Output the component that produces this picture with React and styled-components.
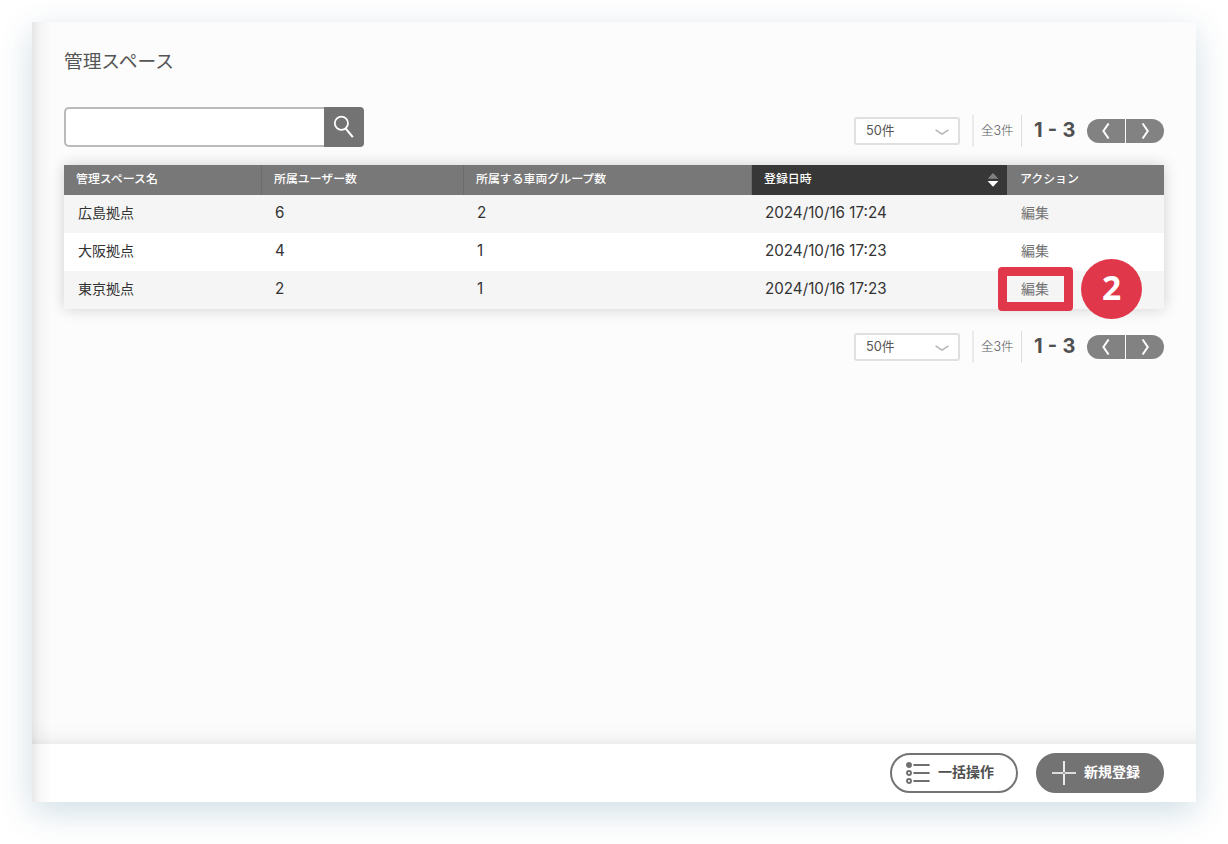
import React from 'react';
import styled, { createGlobalStyle, css } from 'styled-components';

const columns = [
  { key: 'name', label: '管理スペース名' },
  { key: 'users', label: '所属ユーザー数' },
  { key: 'groups', label: '所属する車両グループ数' },
  { key: 'createdAt', label: '登録日時', sorted: true },
  { key: 'action', label: 'アクション' },
];

const spaces = [
  { name: '広島拠点', users: 6, groups: 2, createdAt: '2024/10/16 17:24' },
  { name: '大阪拠点', users: 4, groups: 1, createdAt: '2024/10/16 17:23' },
  { name: '東京拠点', users: 2, groups: 1, createdAt: '2024/10/16 17:23', step: 2 },
];

function Pagination() {
  return (
    <Pager>
      <PageSize>
        50件
        <svg width="14" height="7" viewBox="0 0 14 7" fill="none" stroke="#b4b4b4" strokeWidth="1.5">
          <path d="M0.6 0.9 L7 5.2 L13.4 0.9" />
        </svg>
      </PageSize>
      <Total>全3件</Total>
      <Range>1 - 3</Range>
      <PageButtons>
        <PageButton $side="left" aria-label="前へ">
          <svg width="8" height="16" viewBox="0 0 8 16" fill="none" stroke="#fff" strokeWidth="2">
            <path d="M6.6 0.5 L1.4 8 L6.6 15.5" />
          </svg>
        </PageButton>
        <PageButton $side="right" aria-label="次へ">
          <svg width="8" height="16" viewBox="0 0 8 16" fill="none" stroke="#fff" strokeWidth="2">
            <path d="M1.6 0.5 L6.8 8 L1.6 15.5" />
          </svg>
        </PageButton>
      </PageButtons>
    </Pager>
  );
}

function App() {
  return (
    <Panel>
      <GlobalStyle />
      <Main>
        <Title>管理スペース</Title>
        <Toolbar>
          <Search>
            <SearchInput />
            <SearchButton aria-label="検索">
              <svg width="22" height="24" viewBox="0 0 22 24" fill="none" stroke="#fff">
                <circle cx="8.4" cy="8.3" r="6.6" strokeWidth="1.8" />
                <path d="M12.4 13.2 L19.8 22.2" strokeWidth="2.1" />
              </svg>
            </SearchButton>
          </Search>
          <Pagination />
        </Toolbar>
        <Table>
          <HeadRow>
            {columns.map((column) => (
              <HeadCell key={column.key} $sorted={column.sorted}>
                {column.label}
                {column.sorted && (
                  <svg width="12" height="14" viewBox="0 0 12 14">
                    <path d="M6 0 L11.4 5.8 H0.6 Z" fill="#828282" />
                    <path d="M6 13.8 L11.4 8 H0.6 Z" fill="#fff" />
                  </svg>
                )}
              </HeadCell>
            ))}
          </HeadRow>
          {spaces.map((space) => (
            <Row key={space.name}>
              <Cell $name>{space.name}</Cell>
              <Cell>{space.users}</Cell>
              <Cell>{space.groups}</Cell>
              <Cell>{space.createdAt}</Cell>
              <Cell $action>
                <EditLink>編集</EditLink>
                {space.step && <Highlight />}
                {space.step && <StepBadge>{space.step}</StepBadge>}
              </Cell>
            </Row>
          ))}
        </Table>
        <Pagination />
      </Main>
      <Footer>
        <ActionButton>
          <svg width="24" height="24" viewBox="0 0 24 24" fill="none" stroke="#6f6f6f" strokeWidth="1.9">
            <circle cx="3" cy="4" r="2" fill="#6f6f6f" />
            <circle cx="3" cy="12" r="2" />
            <circle cx="3" cy="20" r="2" />
            <path d="M7.4 4 H23.6 M7.4 12 H23.6 M7.4 20 H23.6" />
          </svg>
          <span>一括操作</span>
        </ActionButton>
        <ActionButton $primary>
          <svg width="24" height="24" viewBox="0 0 24 24" fill="none" stroke="#fff" strokeWidth="1.7">
            <path d="M0 12 H11.2 M12.8 12 H24 M12 0 V11.2 M12 12.8 V24" />
          </svg>
          <span>新規登録</span>
        </ActionButton>
      </Footer>
    </Panel>
  );
}

const GlobalStyle = createGlobalStyle`
  * {
    box-sizing: border-box;
  }

  body {
    margin: 0;
    padding: 22px 32px 42px;
    background: #fff;
    color: #333;
    font-family: Inter, 'Noto Sans CJK JP', sans-serif;
    overflow: hidden;
  }

  button {
    font-family: inherit;
    border: 0;
    padding: 0;
  }

  svg {
    display: block;
    flex: none;
  }
`;

const Panel = styled.div`
  position: relative;
  display: flex;
  flex-direction: column;
  height: 780px;
  background: #fff;
  box-shadow: 0 10px 32px rgba(0, 80, 112, 0.19);

  /* shade cast on the left edge by the side menu */
  &::before {
    content: '';
    position: absolute;
    inset: 0 auto 0 0;
    z-index: 1;
    width: 20px;
    background: linear-gradient(to right, rgba(0, 0, 0, 0.09), rgba(0, 0, 0, 0.035) 35%, transparent);
  }
`;

const Main = styled.main`
  flex: 1;
  display: flex;
  flex-direction: column;
  padding: 24px 32px 0;
  background: linear-gradient(to top, #ededed, #f5f5f5 6px, #fafafa 14px, #fcfcfc 24px);
`;

const Title = styled.h1`
  margin: 0;
  height: 61px;
  font-size: 18.7px;
  line-height: 31px;
  font-weight: 400;
  color: #555;
`;

const Toolbar = styled.div`
  display: flex;
  justify-content: space-between;
  height: 58px;

  > div:last-child {
    margin-top: 8px;
  }
`;

const Search = styled.div`
  display: flex;
  width: 300px;
  height: 40px;
`;

const SearchInput = styled.input`
  flex: 1;
  min-width: 0;
  border: 2px solid #bababa;
  border-right: 0;
  border-radius: 5px 0 0 5px;
  background: #fff;
  outline: none;
`;

const SearchButton = styled.button`
  display: flex;
  width: 40px;
  padding: 8px 0 0 9px;
  background: #737373;
  border-radius: 0 4px 4px 0;
`;

const Pager = styled.div`
  display: flex;
  justify-content: flex-end;
  align-items: center;
  height: 32px;
`;

const PageSize = styled.div`
  display: flex;
  justify-content: space-between;
  align-items: center;
  width: 106px;
  height: 28px;
  padding: 0 9px 0 10px;
  margin-right: 12px;
  border: 2px solid #e0e0e0;
  border-radius: 3px;
  background: #fff;
  font-size: 12.8px;
  line-height: 24px;
  color: #555;

  svg {
    margin-top: 3px;
  }
`;

const Total = styled.div`
  width: 50px;
  height: 32px;
  padding-left: 7px;
  border-left: 2px solid #ebebeb;
  border-right: 1px solid #dedede;
  font-size: 12.5px;
  font-weight: 300;
  line-height: 31px;
  color: #555;
  white-space: nowrap;
`;

const Range = styled.div`
  width: 65px;
  padding-left: 12px;
  font-size: 20px;
  font-weight: 700;
  line-height: 28px;
  color: #505050;
  white-space: nowrap;
  margin-top: -3px;
  word-spacing: 0.5px;
`;

const PageButtons = styled.div`
  display: flex;
  gap: 1px;
`;

const PageButton = styled.button`
  display: flex;
  align-items: center;
  justify-content: center;
  width: 38px;
  height: 24px;
  background: #828282;
  border-radius: ${({ $side }) => ($side === 'left' ? '12px 0 0 12px' : '0 12px 12px 0')};
`;

const Table = styled.div`
  margin-bottom: 22px;
  box-shadow: 0 0 14px rgba(0, 0, 0, 0.18);
`;

const Row = styled.div`
  display: grid;
  grid-template-columns: 198px 202px 288px 255px 157px;
  height: 38px;
  background: #fff;

  &:nth-child(even) {
    background: #f5f5f5;
  }
`;

const HeadRow = styled(Row)`
  height: 30px;
  background: #787878;
`;

const HeadCell = styled.div`
  display: flex;
  justify-content: space-between;
  padding: 0 8px 0 12px;
  border-right: 1px solid #6c6c6c;
  font-size: 11.9px;
  line-height: 28px;
  font-weight: 500;
  color: #fff;

  &:last-child {
    padding-left: 13px;
    border-right: 0;
  }

  svg {
    margin-top: 8px;
  }

  ${({ $sorted }) =>
    $sorted &&
    css`
      background: #373737;
      border-right: 0;
    `}
`;

const Cell = styled.div`
  position: relative;
  padding-left: ${({ $name, $action }) => ($name || $action ? 14 : 13)}px;
  font-size: ${({ $name }) => ($name ? 14 : 15.2)}px;
  line-height: 36px;
`;

const EditLink = styled.a`
  font-size: 14px;
  color: #737373;
`;

const Highlight = styled.div`
  position: absolute;
  top: -4px;
  left: -9px;
  width: 75px;
  height: 44px;
  border: 9px solid #e1374a;
  border-radius: 4px;
`;

const StepBadge = styled.div`
  position: absolute;
  top: -12px;
  left: 74px;
  width: 61px;
  height: 60px;
  border-radius: 50%;
  background: #e1374a;
  color: #fff;
  font-family: 'Open Sans', sans-serif;
  font-size: 33.5px;
  font-weight: 700;
  line-height: 56px;
  text-align: center;
`;

const Footer = styled.footer`
  display: flex;
  justify-content: flex-end;
  align-items: center;
  gap: 18px;
  height: 58px;
  padding-right: 32px;
  background: #fff;
`;

const ActionButton = styled.button`
  display: flex;
  align-items: center;
  width: 128px;
  height: 40px;
  gap: 8px;
  padding-left: 14px;
  border: 2px solid #737373;
  border-radius: 20px;
  background: ${({ $primary }) => ($primary ? '#737373' : '#fff')};
  color: ${({ $primary }) => ($primary ? '#fff' : '#505050')};
  font-size: 14px;
  font-weight: 700;
  line-height: 20px;

  span {
    padding-bottom: 2px;
  }
`;

export default App;
